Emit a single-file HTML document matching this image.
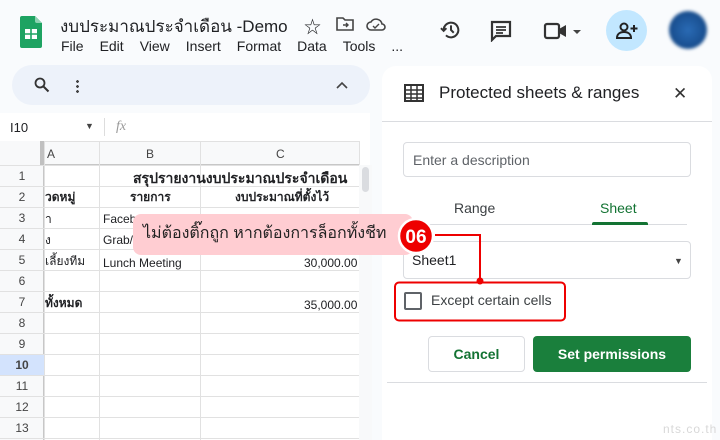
<!DOCTYPE html><html><head><meta charset="utf-8"><style>
*{box-sizing:border-box;margin:0;padding:0}
body{width:720px;height:440px;background:#f9fbfd;font-family:"Liberation Sans","Noto Sans CJK SC",sans-serif;position:relative;overflow:hidden;color:#202124}
.a{position:absolute}
.menu span{margin-right:16px}
.cell{position:absolute;font-size:12px;white-space:nowrap}
</style></head><body>
<svg class="a" style="left:20px;top:16px" width="22" height="32" viewBox="0 0 22 32"><path d="M2 0h13l7 7v23a2 2 0 0 1-2 2H2a2 2 0 0 1-2-2V2a2 2 0 0 1 2-2z" fill="#1ea362"/><path d="M15 0l7 7h-5a2 2 0 0 1-2-2z" fill="#8ed1b1"/><rect x="5" y="13" width="12" height="10" fill="#fff"/><path d="M5 18h12M11 13v10" stroke="#1ea362" stroke-width="1.6"/></svg>
<div class="a" style="left:60px;top:13px;font-size:17px;white-space:nowrap">งบประมาณประจำเดือน -Demo</div>
<div class="a" style="left:304px;top:13px;font-size:17px">☆</div>
<svg class="a" style="left:336px;top:16px" width="18" height="16"><path d="M1 2h6l2 2h8v10H1z" fill="none" stroke="#444" stroke-width="1.6"/><path d="M7 9h5M10 7l2 2-2 2" stroke="#444" stroke-width="1.4" fill="none"/></svg>
<svg class="a" style="left:366px;top:16px" width="20" height="16"><path d="M5 14a4 4 0 0 1 0-8 6 6 0 0 1 11 2 3 3 0 0 1 0 6z" fill="none" stroke="#444" stroke-width="1.6"/><path d="M7 10l2 2 4-4" stroke="#444" stroke-width="1.4" fill="none"/></svg>
<div class="a menu" style="left:61px;top:38px;font-size:14px;white-space:nowrap"><span>File</span><span>Edit</span><span>View</span><span>Insert</span><span>Format</span><span>Data</span><span>Tools</span>...</div>
<svg class="a" style="left:440px;top:19px" width="22" height="22" viewBox="0 0 24 24"><path d="M4 12a8 8 0 1 1 2.5 5.8" fill="none" stroke="#333" stroke-width="2.2"/><path d="M1 10l3 3 3-3" fill="none" stroke="#333" stroke-width="2"/><path d="M12 7v5l3 3" fill="none" stroke="#333" stroke-width="2.2"/></svg>
<svg class="a" style="left:490px;top:20px" width="22" height="22" viewBox="0 0 22 22"><path d="M2 2h18v14H6l-4 4z" fill="none" stroke="#333" stroke-width="2.2"/><path d="M6 7h10M6 10h10M6 13h7" stroke="#333" stroke-width="1.8"/></svg>
<svg class="a" style="left:543px;top:22px" width="42" height="18"><rect x="2" y="2" width="14" height="14" rx="2" fill="none" stroke="#333" stroke-width="2.2"/><path d="M16 7l7-4v12l-7-4z" fill="#333"/><path d="M30 8l4 4 4-4z" fill="#444"/></svg>
<div class="a" style="left:606px;top:10px;width:41px;height:41px;border-radius:50%;background:#c2e7ff"></div>
<svg class="a" style="left:616px;top:21px" width="22" height="20" viewBox="0 0 22 20"><circle cx="8" cy="6" r="3.5" fill="none" stroke="#222" stroke-width="2"/><path d="M1 17c0-4 3-6 7-6s7 2 7 6z" fill="none" stroke="#222" stroke-width="2"/><path d="M18 4v7M14.5 7.5h7" stroke="#222" stroke-width="2"/></svg>
<div class="a" style="left:669px;top:11px;width:38px;height:38px;border-radius:50%;background:radial-gradient(#2a6bb5,#174c8c 70%,#6d9ad0);filter:blur(1.5px)"></div>
<div class="a" style="left:12px;top:65px;width:358px;height:40px;border-radius:20px;background:#edf2fa"></div>
<svg class="a" style="left:34px;top:77px" width="16" height="16"><circle cx="6" cy="6" r="4.5" fill="none" stroke="#333" stroke-width="1.8"/><path d="M9.5 9.5l5 5" stroke="#333" stroke-width="2"/></svg>
<div class="a" style="left:76px;top:79px;width:3px;height:14px;background:radial-gradient(circle,#444 1.3px,transparent 1.5px) 0 0/3px 5px"></div>
<svg class="a" style="left:336px;top:81px" width="12" height="8"><path d="M1 7l5-5 5 5" fill="none" stroke="#444" stroke-width="1.6"/></svg>
<div class="a" style="left:0;top:113px;width:370px;height:327px;background:#fff"></div>
<div class="a" style="left:10px;top:120px;font-size:13px">I10</div>
<div class="a" style="left:85px;top:121px;font-size:9px;color:#444">▼</div>
<div class="a" style="left:104px;top:118px;width:1px;height:18px;background:#ddd"></div>
<div class="a" style="left:116px;top:119px;font-size:14px;font-style:italic;color:#999;font-family:'Liberation Serif',serif">fx</div>
<div class="a" style="left:0;top:141px;width:359px;height:24px;background:#f8f9fa;border-bottom:1px solid #c7c7c7;border-top:1px solid #e1e1e1"></div>
<div class="a" style="left:0;top:141px;width:44px;height:299px;background:#f8f9fa;border-right:1px solid #c7c7c7"></div>
<div class="a" style="left:0;top:354px;width:44px;height:21px;background:#d3e3fd"></div>
<div class="a" style="left:40px;top:141px;width:4px;height:24px;background:#c0c0c0"></div>
<div id="grid"></div>
<div class="cell" style="left:47px;top:147px;color:#444">A</div>
<div class="cell" style="left:146px;top:147px;color:#444">B</div>
<div class="cell" style="left:276px;top:147px;color:#444">C</div>
<div class="cell" style="left:133px;top:168px;font-size:14px;font-weight:bold">สรุปรายงานงบประมาณประจำเดือน</div>
<div class="cell" style="left:45px;top:188px;font-weight:bold">วดหมู่</div>
<div class="cell" style="left:130px;top:188px;font-weight:bold">รายการ</div>
<div class="cell" style="left:235px;top:188px;font-weight:bold">งบประมาณที่ตั้งไว้</div>
<div class="cell" style="left:45px;top:210px">า</div><div class="cell" style="left:103px;top:212px">Faceb</div>
<div class="cell" style="left:45px;top:231px">ง</div><div class="cell" style="left:103px;top:233px">Grab/</div>
<div class="cell" style="left:45px;top:252px">เลี้ยงทีม</div><div class="cell" style="left:103px;top:256px">Lunch Meeting</div>
<div class="cell" style="left:304px;top:256px">30,000.00</div>
<div class="cell" style="left:45px;top:294px;font-weight:bold">ทั้งหมด</div>
<div class="cell" style="left:304px;top:298px">35,000.00</div>
<div class="a" style="left:359px;top:165px;width:13px;height:275px;background:#f8f9fa"></div>
<div class="a" style="left:362px;top:167px;width:7px;height:25px;border-radius:4px;background:#dadce0"></div>
<div class="a" style="left:382px;top:66px;width:330px;height:374px;background:#fff;border-radius:14px 14px 0 0"></div>
<svg class="a" style="left:404px;top:84px" width="20" height="18"><rect x="1" y="1" width="18" height="16" fill="none" stroke="#333" stroke-width="2"/><path d="M1 6h18M1 10h18M1 14h18M7 1v16M13 1v16" stroke="#333" stroke-width="1.5"/></svg>
<div class="a" style="left:439px;top:83px;font-size:17px">Protected sheets &amp; ranges</div>
<div class="a" style="left:673px;top:84px;font-size:17px;color:#333">✕</div>
<div class="a" style="left:382px;top:121px;width:330px;height:1px;background:#dadce0"></div>
<div class="a" style="left:403px;top:142px;width:288px;height:35px;border:1px solid #dadce0;border-radius:4px;font-size:14px;color:#5f6368;padding:9px 9px">Enter a description</div>
<div class="a" style="left:454px;top:200px;font-size:14px;color:#3c4043">Range</div>
<div class="a" style="left:600px;top:200px;font-size:14px;color:#137333">Sheet</div>
<div class="a" style="left:403px;top:224px;width:284px;height:1px;background:#dadce0"></div>
<div class="a" style="left:592px;top:222px;width:56px;height:3px;background:#137333;border-radius:2px 2px 0 0"></div>
<div class="a" style="left:403px;top:241px;width:288px;height:38px;border:1px solid #dadce0;border-radius:4px;font-size:14px;padding:10px 8px">Sheet1</div>
<div class="a" style="left:674px;top:256px;font-size:9px;color:#444">▼</div>
<div class="a" style="left:404px;top:292px;width:18px;height:18px;border:2px solid #5f6368;border-radius:2px"></div>
<div class="a" style="left:431px;top:292px;font-size:14px;color:#3c4043">Except certain cells</div>
<div class="a" style="left:428px;top:336px;width:97px;height:36px;border:1px solid #dadce0;border-radius:4px;font-size:14px;font-weight:bold;color:#137333;text-align:center;line-height:34px">Cancel</div>
<div class="a" style="left:533px;top:336px;width:158px;height:36px;background:#1a7f3c;border-radius:4px;font-size:14px;font-weight:bold;color:#fff;text-align:center;line-height:36px">Set permissions</div>
<div class="a" style="left:387px;top:382px;width:320px;height:1px;background:#dadce0"></div>
<div class="a" style="left:663px;top:422px;font-size:12px;color:#d8d8d8;letter-spacing:1px">nts.co.th</div>
<div class="a" style="left:133px;top:214px;width:280px;height:41px;background:#ffcdd2;border-radius:8px"></div>
<div class="a" style="left:143px;top:221px;font-size:16px;color:#222;white-space:nowrap">ไม่ต้องติ๊กถูก หากต้องการล็อกทั้งชีท</div>
<svg class="a" style="left:0;top:0" width="720" height="440"><path d="M435 235H480V281" fill="none" stroke="#e00" stroke-width="2"/><circle cx="480" cy="281" r="3.5" fill="#e00"/><rect x="395" y="282.5" width="170" height="38" rx="4" fill="none" stroke="#e00" stroke-width="2"/><circle cx="416" cy="236" r="17" fill="#e00" stroke="#fff" stroke-width="2.5"/><text x="416" y="243" text-anchor="middle" font-family="Liberation Sans" font-weight="bold" font-size="19" fill="#fff">06</text></svg>
<script>
var g='';var xs=[44,99,200,359];
for(var i=0;i<=13;i++){var y=165+i*21;g+='<div class="a" style="left:0;top:'+y+'px;width:359px;height:1px;background:#e1e1e1"></div>';}
xs.forEach(function(x){g+='<div class="a" style="left:'+x+'px;top:141px;width:1px;height:299px;background:#e1e1e1"></div>'});
for(var i=1;i<=13;i++){var y=165+(i-1)*21;g+='<div class="cell" style="left:0;width:44px;text-align:center;top:'+(y+4)+'px;color:#444;'+(i==10?'font-weight:bold':'')+'">'+i+'</div>';}
document.getElementById('grid').innerHTML=g;
</script>
</body></html>
